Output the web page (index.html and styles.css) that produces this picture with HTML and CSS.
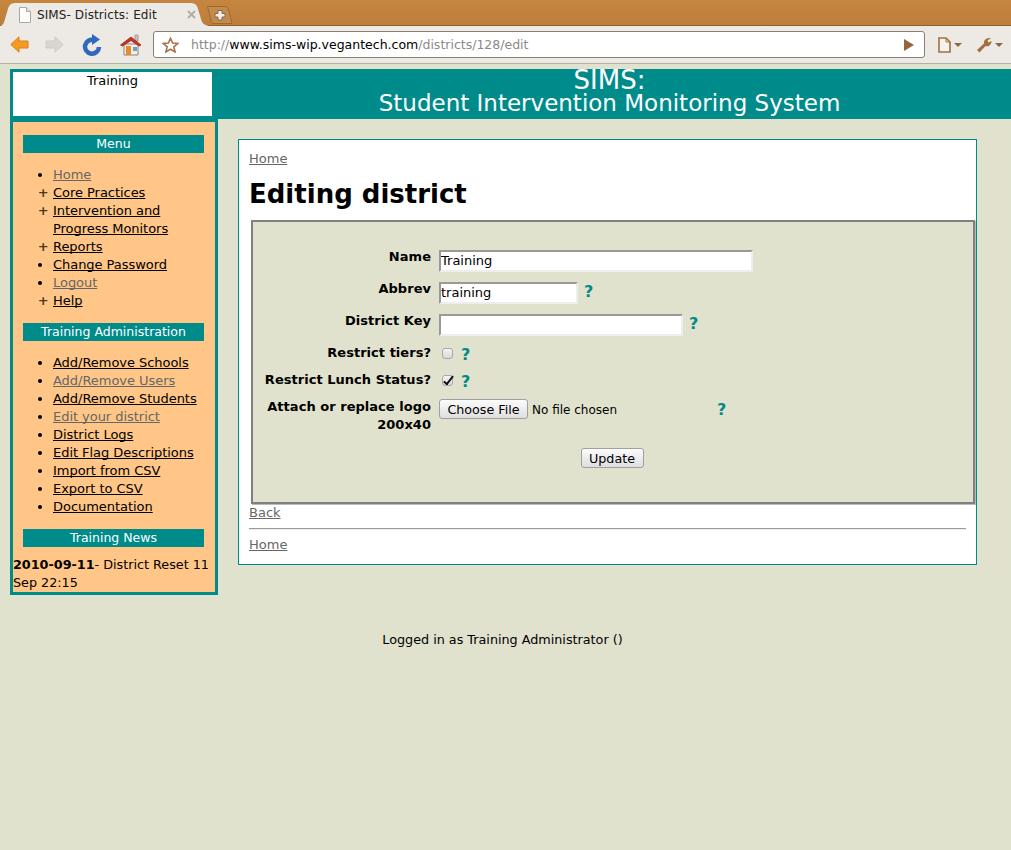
FILE: index.html
```html
<!DOCTYPE html>
<html lang="en">
<head>
    <meta charset="UTF-8" />
    <title>SIMS- Districts: Edit</title>
    <link rel="stylesheet" href="styles.css">
</head>
<body>
<div class="browser">
    <div class="tabstrip">
        <div class="tab">
            <svg class="tab-shape" width="212" height="23" viewBox="0 0 212 23">
                <path d="M0 23 C4 23 5 20 6 16 L9 6 C10 2 12 0 17 0 H191 C196 0 198 2 199 6 L202 16 C203 20 205 22 210 23 Z" fill="#edeae5"/>
            </svg>
            <svg class="tab-icon" width="13" height="16" viewBox="0 0 13 16">
                <path d="M1.5 .5 H8.5 L12.5 4.5 V15.5 H1.5 Z" fill="#fdfdfb" stroke="#a9a9a4"/>
                <path d="M8.5 .5 V4.5 H12.5" fill="#e4e4e0" stroke="#a9a9a4"/>
            </svg>
            <span class="tab-title">SIMS- Districts: Edit</span>
            <svg class="tab-close" width="9" height="9" viewBox="0 0 9 9">
                <path d="M1 1 L8 8 M8 1 L1 8" stroke="#b0aea9" stroke-width="2"/>
            </svg>
        </div>
        <div class="newtab">
            <svg width="26" height="18" viewBox="0 0 26 18">
                <path d="M.5 .5 H17 C20 .5 21 2 22 5 L25 17.5 H7 C5 17.5 4.5 16 4 14 Z" fill="#c48a4a" stroke="#9a6a34"/>
                <path d="M11 4.5 H15 V7.5 H18 V11 H15 V14 H11 V11 H8 V7.5 H11 Z" fill="#f3efe8" stroke="#7d6a50"/>
            </svg>
        </div>
    </div>
    <div class="toolbar">
        <svg class="btn-back" width="19" height="17" viewBox="0 0 19 17">
            <path d="M9 .8 V5 H18 V12 H9 V16.2 L.8 8.5 Z" fill="#f59a22" stroke="#d9801a"/>
        </svg>
        <svg class="btn-forward" width="19" height="17" viewBox="0 0 19 17">
            <path d="M10 .8 V5 H1 V12 H10 V16.2 L18.2 8.5 Z" fill="#d9d5cf" stroke="#cfcbc4"/>
        </svg>
        <svg class="btn-reload" width="20" height="22" viewBox="0 0 20 22">
            <path d="M12 6 A7 7 0 1 0 17 13" fill="none" stroke="#2f68bd" stroke-width="4.5"/>
            <path d="M10 0 L18 5.5 L10 11 Z" fill="#2f68bd"/>
        </svg>
        <svg class="btn-home" width="22" height="22" viewBox="0 0 22 22">
            <path d="M15 1 H18 V7 H15 Z" fill="#c9c5bd" stroke="#8f8a80" stroke-width=".7"/>
            <path d="M4 10 H18 V21 H4 Z" fill="#f0eee8" stroke="#8a8578"/>
            <path d="M.5 11 L11 3 L21 11 L19 12 L11 6.5 L2.5 12 Z" fill="#c8322a" stroke="#9b2420" stroke-width=".8"/>
            <path d="M6 12 H11 V21 H6 Z" fill="#e88a2a"/>
            <path d="M13 13 H17 V17 H13 Z" fill="#6fa0c8"/>
        </svg>
        <div class="omnibox">
            <svg class="star" width="17" height="16" viewBox="0 0 17 16">
                <path d="M8.5 1.2 L10.6 6 L15.8 6.4 L11.8 9.8 L13.1 14.9 L8.5 12.2 L3.9 14.9 L5.2 9.8 L1.2 6.4 L6.4 6 Z" fill="none" stroke="#a8744a" stroke-width="1.6"/>
            </svg>
            <span class="url"><span class="url-dim">http://</span>www.sims-wip.vegantech.com<span class="url-dim">/districts/128/edit</span></span>
            <svg width="10" height="12" viewBox="0 0 10 12">
                <path d="M0 0 L10 6 L0 12 Z" fill="#94663c"/>
            </svg>
        </div>
        <div class="tool-menus">
            <svg width="13" height="16" viewBox="0 0 13 16">
                <path d="M1 1 H8 L12 5 V15 H1 Z" fill="#f6f3ee" stroke="#a0703f" stroke-width="1.6"/>
                <path d="M8 1 V5 H12" fill="none" stroke="#a0703f"/>
            </svg>
            <span class="caret"></span>
            <svg class="wrench" width="16" height="16" viewBox="0 0 16 16">
                <path d="M1 13 L8 6.5 C7.5 3 10 .5 15 1 L11.5 3.5 L12.5 5.5 L15.5 4 C15.5 8 12.5 10 9.5 9 L3.5 15.5 Z" fill="#a0703f"/>
            </svg>
            <span class="caret"></span>
        </div>
    </div>
</div>

<div class="page">
    <div class="header">
        <div class="district-name">Training</div>
        <div class="site-title"><span class="site-name">SIMS:</span><br>Student Intervention Monitoring System</div>
    </div>
    <div class="columns">
        <div class="sidebar">
            <div class="side-heading">Menu</div>
            <ul class="side-list">
                <li><a class="seen" href="#">Home</a></li>
                <li class="more"><a href="#">Core Practices</a></li>
                <li class="more"><a href="#">Intervention and Progress Monitors</a></li>
                <li class="more"><a href="#">Reports</a></li>
                <li><a href="#">Change Password</a></li>
                <li><a class="seen" href="#">Logout</a></li>
                <li class="more"><a href="#">Help</a></li>
            </ul>
            <div class="side-heading">Training Administration</div>
            <ul class="side-list">
                <li><a href="#">Add/Remove Schools</a></li>
                <li><a class="seen" href="#">Add/Remove Users</a></li>
                <li><a href="#">Add/Remove Students</a></li>
                <li><a class="seen" href="#">Edit your district</a></li>
                <li><a href="#">District Logs</a></li>
                <li><a href="#">Edit Flag Descriptions</a></li>
                <li><a href="#">Import from CSV</a></li>
                <li><a href="#">Export to CSV</a></li>
                <li><a href="#">Documentation</a></li>
            </ul>
            <div class="side-heading">Training News</div>
            <div class="news"><b>2010-09-11</b>- District Reset 11 Sep 22:15</div>
        </div>
        <div class="card">
            <a class="seen" href="#">Home</a>
            <h1>Editing district</h1>
            <form class="edit-form">
                <div class="row">
                    <label for="name">Name</label>
                    <div class="field"><input class="text-input name-input" id="name" type="text" value="Training" /></div>
                </div>
                <div class="row">
                    <label for="abbrev">Abbrev</label>
                    <div class="field"><input class="text-input abbrev-input" id="abbrev" type="text" value="training" /><span class="help">?</span></div>
                </div>
                <div class="row">
                    <label for="key">District Key</label>
                    <div class="field"><input class="text-input key-input" id="key" type="text" /><span class="help">?</span></div>
                </div>
                <div class="row row-check">
                    <label for="tiers">Restrict tiers?</label>
                    <div class="field"><input class="check" id="tiers" type="checkbox" /><span class="help">?</span></div>
                </div>
                <div class="row row-check">
                    <label for="lunch">Restrict Lunch Status?</label>
                    <div class="field"><input class="check" id="lunch" type="checkbox" checked /><span class="help">?</span></div>
                </div>
                <div class="row row-file">
                    <label for="logo">Attach or replace logo 200x40</label>
                    <div class="field"><input class="file-input" id="logo" type="file" /><span class="help help-file">?</span></div>
                </div>
                <div class="actions"><button class="update" type="button">Update</button></div>
            </form>
            <a class="seen" href="#">Back</a>
            <hr class="rule">
            <a class="seen" href="#">Home</a>
        </div>
    </div>
    <div class="footer">Logged in as Training Administrator ()</div>
</div>
</body>
</html>
```

FILE: styles.css
```css
body {
    margin: 0;
    background-color: #e0e2cd;
    color: #000;
    font-family: "DejaVu Sans", sans-serif;
    font-size: 13px;
    line-height: 18px;
}

a {
    color: #000;
    text-decoration-skip-ink: none;
}

a.seen {
    color: #666;
}

/* Browser window */
.browser {
    height: 64px;
}

.tabstrip {
    display: flex;
    height: 25px;
    background: linear-gradient(#c6863f, #bd7e3c);
    border-bottom: 1px solid #8f5f2c;
}

.tab {
    position: relative;
    display: flex;
    align-items: center;
    width: 212px;
    height: 23px;
    margin-top: 3px;
    margin-bottom: -1px;
    padding-left: 18px;
    box-sizing: border-box;
    font-size: 12px;
    letter-spacing: 0.1px;
    color: #222;
}

.tab-shape {
    position: absolute;
    left: -1px;
    top: 0;
}

.tab-icon,
.tab-title,
.tab-close {
    position: relative;
}

.tab-title {
    margin-left: 6px;
    width: 150px;
    white-space: nowrap;
}

.newtab {
    margin-top: 6px;
    margin-left: -5px;
    height: 18px;
}

.toolbar {
    display: flex;
    align-items: center;
    height: 37px;
    padding-left: 10px;
    background-color: #edeae5;
    border-bottom: 1px solid #b3b0a6;
}

.btn-forward {
    margin-left: 16px;
}

.btn-reload {
    margin-left: 18px;
}

.btn-home {
    margin-left: 18px;
}

.omnibox {
    display: flex;
    align-items: center;
    width: 772px;
    height: 27px;
    margin-left: 11px;
    padding: 0 10px 0 8px;
    box-sizing: border-box;
    background-color: #fff;
    border: 1px solid #8a7f70;
    border-radius: 3px;
}

.url {
    flex: 1;
    margin-left: 12px;
    font-size: 12.5px;
    color: #000;
}

.url-dim {
    color: #8a8a8a;
}

.tool-menus {
    display: flex;
    align-items: center;
    margin-left: 13px;
}

.caret {
    width: 0;
    height: 0;
    margin-left: 3px;
    border-left: 4px solid transparent;
    border-right: 4px solid transparent;
    border-top: 4px solid #94663c;
}

.wrench {
    margin-left: 14px;
}

/* Page */
.page {
    padding: 5px 0 0 10px;
}

.header {
    display: flex;
    height: 50px;
    background-color: #008b8b;
}

.district-name {
    width: 199px;
    height: 44px;
    margin: 3px 0 0 3px;
    background-color: #fff;
    text-align: center;
    letter-spacing: -0.05px;
}

.site-title {
    flex: 1;
    padding-right: 4px;
    color: #fff;
    font-size: 23px;
    line-height: 22px;
    text-align: center;
}

.site-name {
    font-size: 26px;
}

.columns {
    display: flex;
    align-items: flex-start;
}

.sidebar {
    width: 202px;
    height: 470px;
    background-color: #ffc687;
    border: 3px solid #008b8b;
}

.side-heading {
    margin: 13px 11px 13px 10px;
    background-color: #008b8b;
    color: #fff;
    font-size: 12.5px;
    text-align: center;
}

.side-list {
    margin: 0;
    padding-left: 40px;
    letter-spacing: -0.04px;
}

.side-list .more {
    list-style-type: "+ ";
}

.side-list .more::marker {
    font-weight: bold;
    color: #4a3a20;
}

.news {
    margin-top: -4px;
    font-size: 12.75px;
}

.card {
    width: 717px;
    height: 404px;
    margin: 20px 0 0 20px;
    padding: 10px;
    background-color: #fff;
    border: 1px solid #008b8b;
}

h1 {
    margin: 8px 0 8px;
    font-size: 26px;
    line-height: 36px;
}

/* District form */
.edit-form {
    width: 720px;
    height: 256px;
    margin-left: 2px;
    padding-top: 24px;
    background-color: #e0e2cd;
    border: 2px solid #808080;
    box-shadow: 1px 1px 0 #bbb;
}

.row {
    display: flex;
    height: 32px;
}

.row-check {
    height: 27px;
}

.row-file {
    height: 52px;
}

.row label {
    width: 178px;
    padding-top: 2px;
    font-weight: bold;
    letter-spacing: 0.03px;
    text-align: right;
}

.field {
    display: flex;
    align-items: flex-start;
    margin-left: 8px;
    padding-top: 4px;
}

.text-input {
    height: 22px;
    padding: 0 0 2px;
    box-sizing: border-box;
    background-color: #fff;
    border: 2px solid;
    border-color: #999 #eee #eee #999;
    font-family: "DejaVu Sans", sans-serif;
    font-size: 13px;
    outline: none;
}

.name-input {
    width: 314px;
}

.abbrev-input {
    width: 139px;
}

.key-input {
    width: 244px;
}

.help {
    margin-left: 6px;
    color: #008b8b;
    font-size: 16px;
    font-weight: bold;
    line-height: 20px;
}

.check {
    position: relative;
    appearance: none;
    width: 11px;
    height: 11px;
    margin: 2px 7px 0 3px;
    background: linear-gradient(#f4f4f4, #d8d8d8);
    border: 1px solid #a8a8a8;
    border-radius: 3px;
}

/* tick pokes out of the box a little, like the gtk one */
.check:checked::after {
    content: "";
    position: absolute;
    left: 3px;
    top: -2px;
    width: 3px;
    height: 9px;
    border: solid #111;
    border-width: 0 2px 2px 0;
    transform: rotate(38deg);
}

.check + .help {
    margin-left: 1px;
    margin-top: -1px;
}

.file-input {
    width: 278px;
    margin-top: -1px;
    font-family: "DejaVu Sans", sans-serif;
    font-size: 12px;
    color: #000;
}

.file-input::file-selector-button,
.update {
    height: 20px;
    padding: 0 7px;
    background: linear-gradient(#fcfcfc, #dedede);
    border: 1px solid #a0a0a0;
    border-radius: 3px;
    color: #000;
    font-family: "DejaVu Sans", sans-serif;
    font-size: 12.7px;
}

.file-input::file-selector-button {
    width: 89px;
    margin-right: 4px;
}

.help-file {
    margin-left: 0;
}

.actions {
    padding-right: 2px;
    text-align: center;
}

.update {
    width: 63px;
}

.rule {
    width: 717px;
    height: 0;
    margin: 6px 0;
    border: none;
    border-top: 1px solid #999;
    border-bottom: 1px solid #eee;
}

.footer {
    margin: 36px 16px 0 0;
    font-size: 12.75px;
    text-align: center;
}
```
